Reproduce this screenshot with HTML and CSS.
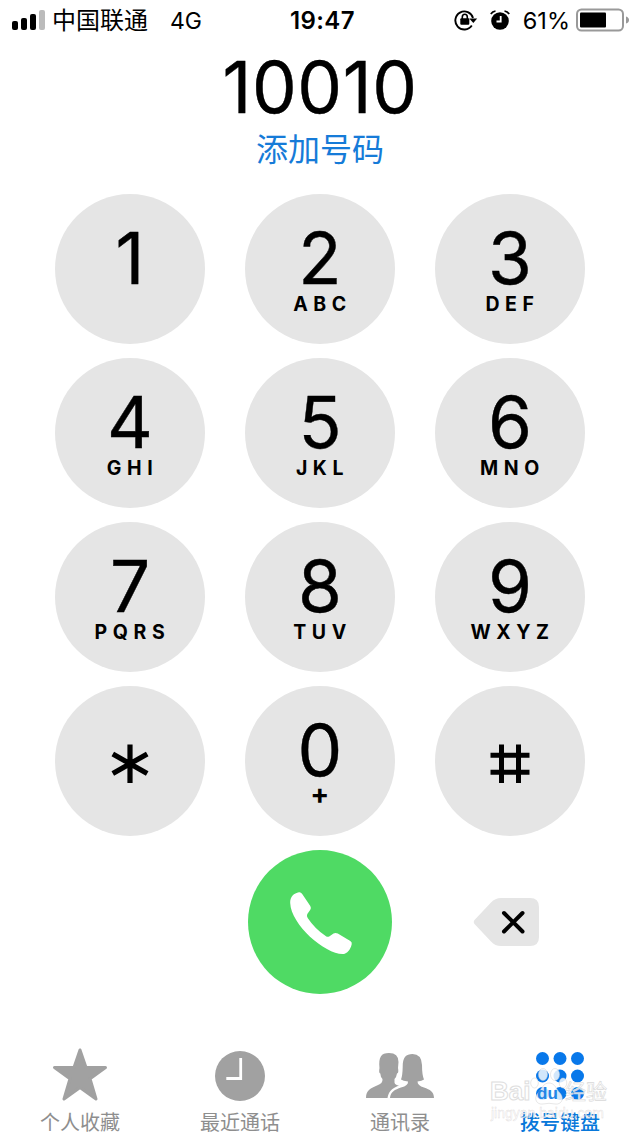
FILE: index.html
```html
<!DOCTYPE html>
<html lang="zh-CN">
<head>
  <meta charset="UTF-8">
  <title>拨号键盘</title>
  <link rel="stylesheet" href="styles.css">
</head>
<body>

  <header class="status-bar">
    <div class="status-left">
      <svg class="signal" width="34" height="22" viewBox="0 0 34 22">
        <rect x="0" y="12" width="6" height="9" rx="2"/>
        <rect x="9" y="9" width="6" height="12" rx="2"/>
        <rect x="18" y="5" width="6" height="16" rx="2"/>
        <rect class="off" x="27" y="1" width="6" height="20" rx="2"/>
      </svg>
      <span class="carrier">中国联通</span>
      <span class="network">4G</span>
    </div>
    <div class="time">19:47</div>
    <div class="status-right">
      <!-- rotation lock -->
      <svg class="lock" width="24" height="22" viewBox="0 0 24 22">
        <path d="M17.800 16.500A9 9 0 1 1 19 9" fill="none" stroke="#000" stroke-width="1.9"/>
        <path d="M15.300 9.500h7.900L19.300 14z"/>
        <rect x="6.3" y="9.2" width="9" height="6.6" rx="1"/>
        <path d="M8.3 10V8a2.500 2.700 0 0 1 5 0v2" fill="none" stroke="#000" stroke-width="1.6"/>
      </svg>
      <svg class="alarm" width="20" height="20" viewBox="0 0 20 20">
        <circle cx="10" cy="11" r="8.800"/>
        <path d="M.8 4Q2.500 1.500 5.500 1M19.200 4Q17.500 1.500 14.500 1" fill="none" stroke="#000" stroke-width="1.7"/>
        <path d="M10.700 6v5.500H6.500" fill="none" stroke="#fff" stroke-width="1.800"/>
      </svg>
      <span class="percent">61%</span>
      <svg class="battery" width="54" height="24" viewBox="0 0 54 24">
        <rect x="1" y="1.500" width="46" height="21" rx="4.500" fill="none" stroke="#999" stroke-width="2"/>
        <rect x="4" y="4.500" width="26" height="15" rx="1"/>
        <path d="M50 8.500q3 1 3 3.500t-3 3.500z" fill="#999"/>
      </svg>
    </div>
  </header>

  <section class="display">
    <div class="number">10010</div>
    <a class="add-number">添加号码</a>
  </section>

  <main class="keypad">
    <div class="key"><span class="digit">1</span></div>
    <div class="key"><span class="digit">2</span><span class="letters">ABC</span></div>
    <div class="key"><span class="digit">3</span><span class="letters">DEF</span></div>
    <div class="key"><span class="digit">4</span><span class="letters">GHI</span></div>
    <div class="key"><span class="digit">5</span><span class="letters">JKL</span></div>
    <div class="key"><span class="digit">6</span><span class="letters">MNO</span></div>
    <div class="key"><span class="digit">7</span><span class="letters">PQRS</span></div>
    <div class="key"><span class="digit">8</span><span class="letters">TUV</span></div>
    <div class="key"><span class="digit">9</span><span class="letters">WXYZ</span></div>
    <div class="key symbol">
      <svg width="40" height="42" viewBox="0 0 40 42">
        <path d="M20 1.500v38.500M2.800 11l34.400 19.500M37.200 11l-34.400 19.500" stroke="#000" stroke-width="5.200"/>
      </svg>
    </div>
    <div class="key"><span class="digit">0</span><span class="letters plus">+</span></div>
    <div class="key symbol">
      <svg width="40" height="42" viewBox="0 0 40 42">
        <path d="M11.500 1.500V40M28.500 1.500V40M.5 12.300h39M.5 29.200h39" stroke="#000" stroke-width="5"/>
      </svg>
    </div>
  </main>

  <section class="actions">
    <div class="call">
      <svg width="144" height="144" viewBox="0 0 144 144">
        <path d="M42.200 53C42 47 46 43 51 42.300Q53 42 54.200 44L62.300 56Q63.500 58 62.300 59.800L59.300 64Q58.300 66 59.700 68Q67 79 78 86.300Q79.500 87.300 81.200 86.500L85.500 83.500Q87.500 82.300 89.800 83.500L102.300 91Q104.300 92.300 103.700 94.300C102.500 100 99 103.500 95.500 104C78 105 43 75 42.200 53z" fill="#fff"/>
      </svg>
    </div>
    <div class="delete">
      <svg width="68" height="50" viewBox="0 0 68 50">
        <path d="M1.500 23Q0 25 1.500 27L18 44.500Q22 49 28 49H57Q66 49 66 40V10Q66 1 57 1H28Q22 1 18 5.500z" fill="#e5e5e5"/>
        <path d="M31 16l18.500 18.500M49.500 16L31 34.500" stroke="#000" stroke-width="4" stroke-linecap="round"/>
      </svg>
    </div>
  </section>

  <nav class="tabs">
    <div class="tab">
      <svg width="72" height="56" viewBox="0 0 72 56">
        <path d="M36 4l6 17.500h19.500L46 32.800l6 20.200-16-11.500L20 53l6-20.200L10.500 21.500H30z" fill="#a1a1a1" stroke="#a1a1a1" stroke-width="3" stroke-linejoin="round"/>
      </svg>
      <span>个人收藏</span>
    </div>
    <div class="tab">
      <svg width="72" height="56" viewBox="0 0 72 56">
        <circle cx="36" cy="30" r="25" fill="#a1a1a1"/>
        <path d="M36.700 12v20.500H22.300" fill="none" stroke="#fff" stroke-width="2.800"/>
      </svg>
      <span>最近通话</span>
    </div>
    <div class="tab">
      <svg width="72" height="56" viewBox="0 0 72 56">
        <path d="M2 52C2 44 7 42 13 39.500Q19 37.500 18.500 33Q16.500 31 16.300 27.500Q14.500 27 15.500 22C14.500 11 17 7 25 7Q34.500 7 34.500 16L34 22Q35 27 33 27.500Q32.500 31 30.500 33V36.500Q31 39 35 39.500C27 42.500 24.500 46 23.500 52z" fill="#a1a1a1"/>
        <path d="M26 52C26.500 46 31 43.500 37 41.500Q44.500 39.500 44 35.500Q39 35 37 33.500Q38.500 30 38.700 21C38.700 11 42 8 48.500 8Q57.500 8 58 19Q58 29 60 33.500Q58 35 53.500 35.500Q53.500 39.500 60 41.500C66 43.500 70 46 70 52z" fill="#a1a1a1"/>
      </svg>
      <span>通讯录</span>
    </div>
    <div class="tab active">
      <svg width="72" height="56" viewBox="0 0 72 56" fill="#0878ea">
        <circle cx="18.500" cy="12.500" r="6.500"/><circle cx="36" cy="12.500" r="6.500"/><circle cx="53.500" cy="12.500" r="6.500"/>
        <circle cx="18.500" cy="30" r="6.500"/><circle cx="36" cy="30" r="6.500"/><circle cx="53.500" cy="30" r="6.500"/>
        <circle cx="18.500" cy="47.500" r="6.500"/><circle cx="36" cy="47.500" r="6.500"/><circle cx="53.500" cy="47.500" r="6.500"/>
      </svg>
      <span>拨号键盘</span>
    </div>
  </nav>

  <div class="watermark">
    <div class="brand">
      <span class="bai">Bai</span>
      <span class="du">du</span>
      <svg class="paw" width="38" height="40" viewBox="0 0 38 40">
        <ellipse cx="4.500" cy="17" rx="3.800" ry="5"/>
        <ellipse cx="13" cy="8.500" rx="4.500" ry="6"/>
        <ellipse cx="25" cy="8.500" rx="4.500" ry="6"/>
        <ellipse cx="33" cy="17" rx="3.800" ry="5"/>
        <path d="M19 17c6 0 7 6 11 10 5 6 1 12-5 11q-6-1.500-12 0c-6 1-10-5-5-11 4-4 5-10 11-10z"/>
      </svg>
      <span class="exp">经验</span>
    </div>
    <div class="site">jingyan.baidu.com</div>
  </div>

</body>
</html>
```
FILE: styles.css
```css
* {
  box-sizing: border-box;
}

body {
  margin: 0;
  width: 640px;
  height: 1136px;
  position: relative;
  overflow: hidden;
  background: #fff;
  color: #000;
  font-family: Inter, "Noto Sans CJK SC", sans-serif;
}

svg {
  display: block;
  flex-shrink: 0;
}

/* status bar */
.status-bar {
  display: grid;
  grid-template-columns: 1fr 80px 1fr;
  align-items: center;
  height: 42px;
  padding: 0 10px 0 12px;
  font-size: 24px;
  line-height: 42px;
  white-space: nowrap;
}

.status-left,
.status-right {
  display: flex;
  align-items: center;
}

.status-right {
  justify-content: flex-end;
}

.signal {
  margin-top: -2px;
}

.signal .off {
  fill: #bbb;
}

.carrier {
  margin-left: 6px;
}

.network {
  margin-left: 22px;
  font-size: 23px;
}

.time {
  padding-left: 3px;
  text-align: center;
  font-weight: 600;
  letter-spacing: 0.4px;
}

.lock,
.alarm,
.battery {
  margin-top: -2px;
}

.alarm {
  margin-left: 12px;
}

.percent {
  margin-left: 13px;
  margin-right: 6px;
  font-size: 23.5px;
}

/* typed number */
.display {
  display: flex;
  flex-direction: column;
  align-items: center;
  height: 152px;
}

.number {
  height: 87px;
  font-size: 71px;
  line-height: 91px;
  letter-spacing: 0.6px;
  -webkit-text-stroke: 0.4px #000;
}

.add-number {
  font-size: 32px;
  line-height: 42px;
  color: #167bd8;
}

/* keypad */
.keypad {
  display: grid;
  grid-template-columns: repeat(3, 150px);
  grid-auto-rows: 150px;
  gap: 14px 40px;
  justify-content: center;
}

.key {
  display: flex;
  flex-direction: column;
  align-items: center;
  padding-top: 29px;
  border-radius: 50%;
  background: #e5e5e5;
}

.digit {
  font-size: 71px;
  line-height: 70px;
  -webkit-text-stroke: 0.4px #000;
}

.letters {
  padding-left: 5px;
  font-size: 19.5px;
  line-height: 22px;
  font-weight: 650;
  letter-spacing: 5.6px;
}

.plus {
  margin-top: -2px;
  font-size: 28px;
  font-weight: 700;
}

.symbol {
  padding-top: 57px;
}

/* call row */
.actions {
  display: grid;
  grid-template-columns: repeat(3, 150px);
  column-gap: 40px;
  justify-content: center;
  align-items: center;
  margin-top: 14px;
}

.call {
  grid-column: 2;
  justify-self: center;
  border-radius: 50%;
  background: #4fda64;
}

.delete {
  padding-left: 38px;
}

/* tabs */
.tabs {
  display: grid;
  grid-template-columns: repeat(4, 160px);
  margin-top: 52px;
}

.tab {
  display: flex;
  flex-direction: column;
  align-items: center;
  font-size: 20px;
  line-height: 28px;
  color: #8e8e8e;
}

.tab span {
  margin-top: 7px;
}

.tab.active {
  color: #0878da;
  font-weight: 500;
}

/* watermark */
.watermark {
  position: absolute;
  left: 490px;
  top: 1066px;
  color: rgba(255, 255, 255, 0.75);
  font-family: "Liberation Sans", "Noto Sans CJK SC", sans-serif;
  line-height: 1;
}

.brand {
  display: flex;
  align-items: flex-end;
  height: 40px;
}

.bai {
  width: 40px;
  font-size: 26px;
  font-weight: bold;
  line-height: 29px;
  -webkit-text-stroke: 1px #dedede;
}

.paw {
  fill: rgba(255, 255, 255, 0.82);
  stroke: rgba(205, 205, 205, 0.6);
  stroke-width: 0.8;
}

/* lies over the paw */
.du {
  position: absolute;
  left: 47px;
  top: 19px;
  z-index: 1;
  font-size: 17px;
  font-weight: bold;
  color: #2386e6;
}

.exp {
  margin-left: -3px;
  font-size: 21px;
  line-height: 29px;
  -webkit-text-stroke: 0.6px #d8d8d8;
}

.site {
  padding-left: 1px;
  font-size: 14px;
  -webkit-text-stroke: 0.4px rgba(215, 210, 210, 0.8);
}
```
